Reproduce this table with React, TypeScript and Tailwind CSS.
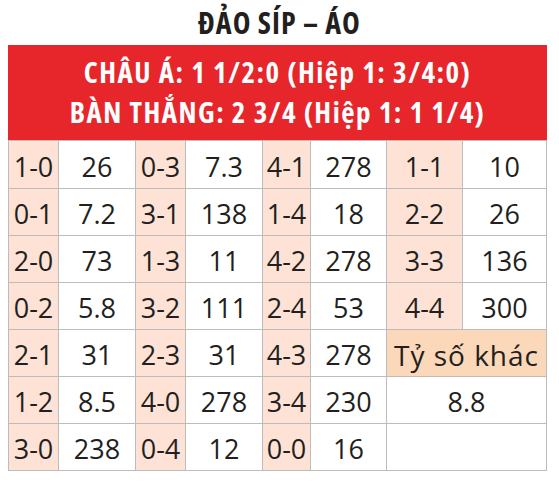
import { Fragment } from 'react';

const rows: string[][] = [
  ['1-0', '26', '0-3', '7.3', '4-1', '278', '1-1', '10'],
  ['0-1', '7.2', '3-1', '138', '1-4', '18', '2-2', '26'],
  ['2-0', '73', '1-3', '11', '4-2', '278', '3-3', '136'],
  ['0-2', '5.8', '3-2', '111', '2-4', '53', '4-4', '300'],
  ['2-1', '31', '2-3', '31', '4-3', '278'],
  ['1-2', '8.5', '4-0', '278', '3-4', '230'],
  ['3-0', '238', '0-4', '12', '0-0', '16'],
];

// last two columns of the bottom three rows are merged cells
const tail = [
  { text: 'Tỷ số khác', cls: 'bg-[#fcd8ba] text-[28px] tracking-[1px]' },
  { text: '8.8', cls: 'bg-white' },
  { text: '', cls: 'bg-white' },
];

export default function App() {
  return (
    <div className="w-[559px] h-[486px] bg-white text-[#231f20] font-['Open_Sans',sans-serif]">
      <h1 className="h-[45px] pt-[1px] flex items-center justify-center text-[30px] font-bold [font-stretch:87.5%] tracking-[1px] leading-none">
        ĐẢO SÍP – ÁO
      </h1>

      <div className="ml-[8px] w-[539px]">
        {/* Odds header */}
        <div className="h-[95px] bg-[#e7262b] text-white flex flex-col items-center justify-center text-[29px] font-bold leading-[40px] [font-stretch:87.5%] tracking-[1.5px] pb-[2px]">
          <div>CHÂU Á: 1 1/2:0 (Hiệp 1: 3/4:0)</div>
          <div>BÀN THẮNG: 2 3/4 (Hiệp 1: 1 1/4)</div>
        </div>

        {/* Score grid */}
        <div className="grid grid-cols-[49px_76px_49px_76px_47px_75px_75px_83px] grid-rows-[47px_repeat(6,46px)] gap-px bg-[#bcbcbc] border border-[#bcbcbc] text-[27px] leading-none">
          {rows.map((r, i) => (
            <Fragment key={i}>
              {r.map((v, j) => (
                <div
                  key={j}
                  className={`flex items-center justify-center pt-[3px] ${j % 2 === 0 ? 'bg-[#fde2d5]' : 'bg-white'}`}
                >
                  {v}
                </div>
              ))}
              {i >= 4 && (
                <div className={`col-span-2 flex items-center justify-center pt-[3px] ${tail[i - 4].cls}`}>
                  {tail[i - 4].text}
                </div>
              )}
            </Fragment>
          ))}
        </div>
      </div>
    </div>
  );
}
